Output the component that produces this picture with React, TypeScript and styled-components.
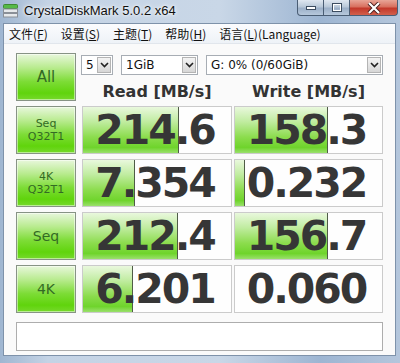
import React from 'react';
import styled, { createGlobalStyle } from 'styled-components';

type Result = {
  label: string[];
  read: string;
  write: string;
  readFill: number;
  writeFill: number;
};

const results: Result[] = [
  { label: ['Seq', 'Q32T1'], read: '214.6', write: '158.3', readFill: 65, writeFill: 63 },
  { label: ['4K', 'Q32T1'], read: '7.354', write: '0.232', readFill: 35, writeFill: 7 },
  { label: ['Seq'], read: '212.4', write: '156.7', readFill: 64, writeFill: 63 },
  { label: ['4K'], read: '6.201', write: '0.060', readFill: 34, writeFill: 0 },
];

const menus = [
  { text: '文件(', key: 'F' },
  { text: '设置(', key: 'S' },
  { text: '主题(', key: 'T' },
  { text: '帮助(', key: 'H' },
  { text: '语言(', key: 'L', tail: '(Language)' },
];

const GlobalStyle = createGlobalStyle`
  html, body {
    margin: 0;
    padding: 0;
  }
  body {
    width: 400px;
    height: 363px;
    overflow: hidden;
    background: #b9cadd;
  }
`;

const Window = styled.div`
  width: 400px;
  height: 363px;
  box-sizing: border-box;
  padding: 0 4px 7px 3px;
  display: flex;
  flex-direction: column;
  background: linear-gradient(to right, #9fb6d1 0%, #c4d3e5 12%, #c9d7e7 55%, #9db5d2 80%, #b4c6dc 100%);
`;

const TitleBar = styled.div`
  height: 23px;
  display: flex;
  align-items: flex-start;
`;

const Title = styled.span`
  margin: 1px 0 0 6px;
  line-height: 19px;
  font-family: "Liberation Sans", Arial, sans-serif;
  font-size: 13px;
  color: #101010;
  text-shadow: 0 0 6px #fff, 0 0 3px #fff;
`;

const WinButtons = styled.div`
  margin-left: auto;
  margin-right: -2px;
  display: flex;
`;

const WinButton = styled.div<{ $width: number; $close?: boolean }>`
  width: ${(p) => p.$width}px;
  height: 16px;
  box-sizing: border-box;
  border: 1px solid #4a5d74;
  border-top: none;
  margin-left: -1px;
  display: flex;
  align-items: center;
  justify-content: center;
  background: ${(p) =>
    p.$close
      ? 'linear-gradient(#e8a597 0%, #d8705f 45%, #c3382a 55%, #d2604c 100%)'
      : 'linear-gradient(#dfe7f0 0%, #b9c8d9 45%, #9cb0c8 55%, #b7c8dc 100%)'};
  &:first-child {
    border-bottom-left-radius: 4px;
  }
  &:last-child {
    border-bottom-right-radius: 4px;
  }
`;

const Client = styled.div`
  flex: 1;
  display: flex;
  flex-direction: column;
  border: 1px solid #7e92aa;
  background: #fafafa;
`;

const MenuBar = styled.div`
  height: 20px;
  box-sizing: border-box;
  display: flex;
  align-items: center;
  gap: 13px;
  padding-left: 5px;
  background: linear-gradient(#fbfcfe, #eef2f7);
  border-bottom: 1px solid #e1e6ec;
  font-family: "Noto Sans CJK SC", "DejaVu Sans", sans-serif;
  font-size: 12px;
  color: #111;
`;

const MenuItem = styled.span`
  line-height: 18px;
  u {
    text-decoration: underline;
    text-underline-offset: 1px;
  }
`;

const Content = styled.div`
  flex: 1;
  padding: 9px 12px 4px;
  display: flex;
  flex-direction: column;
  gap: 5px;
`;

const Row = styled.div`
  height: 48px;
  display: flex;
  gap: 6px;
`;

const LabelButton = styled.div<{ $size: number }>`
  width: 60px;
  flex: none;
  box-sizing: border-box;
  border: 1px solid #879385;
  display: flex;
  flex-direction: column;
  align-items: center;
  justify-content: center;
  background: linear-gradient(#e8f7dc 0%, #b8eb8e 30%, #7ddc36 60%, #60d40c 85%, #76d92c 100%);
  box-shadow: inset 0 0 0 1px rgba(255, 255, 255, 0.5);
  font-family: "DejaVu Sans", sans-serif;
  font-size: ${(p) => p.$size}px;
  line-height: ${(p) => (p.$size < 12 ? 13 : 16)}px;
  color: #336a24;
`;

const TopRight = styled.div`
  flex: 1;
  display: flex;
  flex-direction: column;
`;

const SelectRow = styled.div`
  display: flex;
  gap: 8px;
  margin: 2px 0 0 -1px;
`;

const SelectBox = styled.div<{ $width: number }>`
  width: ${(p) => p.$width}px;
  height: 20px;
  box-sizing: border-box;
  border: 1px solid #a7adb4;
  background: #fff;
  display: flex;
  align-items: stretch;
  font-family: "DejaVu Sans", sans-serif;
  font-size: 12px;
  color: #111;
`;

const SelectText = styled.span`
  flex: 1;
  padding-left: 4px;
  line-height: 18px;
  white-space: nowrap;
`;

const SelectArrow = styled.span`
  width: 14px;
  margin: 1px;
  box-sizing: border-box;
  border: 1px solid #b4b4b4;
  background: linear-gradient(#f4f4f4, #d6d6d6);
  display: flex;
  align-items: center;
  justify-content: center;
`;

const HeaderRow = styled.div`
  flex: 1;
  display: flex;
  gap: 2px;
  align-items: center;
  padding-top: 6px;
`;

const Header = styled.div<{ $width: number }>`
  width: ${(p) => p.$width}px;
  text-align: center;
  font-family: "DejaVu Sans", sans-serif;
  font-weight: bold;
  font-size: 16px;
  color: #333;
`;

const Values = styled.div`
  display: flex;
  gap: 2px;
`;

const ValueBox = styled.div<{ $width: number }>`
  position: relative;
  width: ${(p) => p.$width}px;
  box-sizing: border-box;
  border: 1px solid #cbcbcb;
  background: #fefefe;
  overflow: hidden;
  display: flex;
  align-items: center;
  justify-content: center;
`;

const Fill = styled.div`
  position: absolute;
  left: 0;
  top: 0;
  bottom: 0;
  box-sizing: border-box;
  border-right: 1px solid #4f5c47;
  background: linear-gradient(#e9f8dd 0%, #c0eca0 32%, #8bdc4c 66%, #6fd42c 88%, #9ae06c 100%);
`;

const Value = styled.span`
  position: relative;
  margin-left: -4px;
  font-family: "DejaVu Sans", sans-serif;
  font-weight: bold;
  font-size: 41px;
  letter-spacing: -2px;
  color: #363636;
  line-height: 46px;
`;

const Comment = styled.div`
  height: 29px;
  margin-top: 4px;
  box-sizing: border-box;
  border: 1px solid #adadad;
  background: #fff;
`;

const Chevron = () => (
  <svg width="9" height="6" viewBox="0 0 9 6">
    <path d="M1 1 L4.5 4.5 L8 1" fill="none" stroke="#222" strokeWidth="1.6" />
  </svg>
);

const Select = ({ width, value }: { width: number; value: string }) => (
  <SelectBox $width={width}>
    <SelectText>{value}</SelectText>
    <SelectArrow>
      <Chevron />
    </SelectArrow>
  </SelectBox>
);

const AppIcon = () => (
  <svg width="15" height="14" viewBox="0 0 15 14" style={{ marginTop: 4 }}>
    <rect x="0.5" y="0.5" width="14" height="4" rx="1" fill="#56b948" stroke="#3d8a32" />
    <rect x="0.5" y="5" width="14" height="3.5" fill="#e6e9ec" stroke="#8a9098" />
    <rect x="0.5" y="9.5" width="14" height="3.5" fill="#e6e9ec" stroke="#8a9098" />
  </svg>
);

const App: React.FC = () => {
  return (
    <>
      <GlobalStyle />
      <Window>
        <TitleBar>
          <AppIcon />
          <Title>CrystalDiskMark 5.0.2 x64</Title>
          <WinButtons>
            <WinButton $width={27}>
              <svg width="10" height="4" viewBox="0 0 10 4">
                <rect x="0.5" y="0.5" width="9" height="3" fill="#fff" stroke="#3c4c60" />
              </svg>
            </WinButton>
            <WinButton $width={27}>
              <svg width="10" height="9" viewBox="0 0 10 9">
                <rect x="0.5" y="0.5" width="9" height="8" fill="none" stroke="#3c4c60" />
                <rect x="1.5" y="1.5" width="7" height="6" fill="none" stroke="#fff" />
              </svg>
            </WinButton>
            <WinButton $width={49} $close>
              <svg width="14" height="12" viewBox="0 0 14 12">
                <path d="M2 1 L12 11 M12 1 L2 11" stroke="#4a2020" strokeWidth="4" />
                <path d="M2 1 L12 11 M12 1 L2 11" stroke="#fff" strokeWidth="2.2" />
              </svg>
            </WinButton>
          </WinButtons>
        </TitleBar>
        <Client>
          <MenuBar>
            {menus.map((m) => (
              <MenuItem key={m.key}>
                {m.text}
                <u>{m.key}</u>){m.tail}
              </MenuItem>
            ))}
          </MenuBar>
          <Content>
            <Row>
              <LabelButton $size={15}>All</LabelButton>
              <TopRight>
                <SelectRow>
                  <Select width={32} value="5" />
                  <Select width={77} value="1GiB" />
                  <Select width={177} value="G: 0% (0/60GiB)" />
                </SelectRow>
                <HeaderRow>
                  <Header $width={150}>Read [MB/s]</Header>
                  <Header $width={149}>Write [MB/s]</Header>
                </HeaderRow>
              </TopRight>
            </Row>
            {results.map((r) => (
              <Row key={r.label.join(' ') + r.read}>
                <LabelButton $size={r.label.length > 1 ? 11 : 14}>
                  {r.label.map((l) => (
                    <span key={l}>{l}</span>
                  ))}
                </LabelButton>
                <Values>
                  <ValueBox $width={150}>
                    {r.readFill > 0 && <Fill style={{ width: `${r.readFill}%` }} />}
                    <Value>{r.read}</Value>
                  </ValueBox>
                  <ValueBox $width={149}>
                    {r.writeFill > 0 && <Fill style={{ width: `${r.writeFill}%` }} />}
                    <Value>{r.write}</Value>
                  </ValueBox>
                </Values>
              </Row>
            ))}
            <Comment />
          </Content>
        </Client>
      </Window>
    </>
  );
};

export default App;
